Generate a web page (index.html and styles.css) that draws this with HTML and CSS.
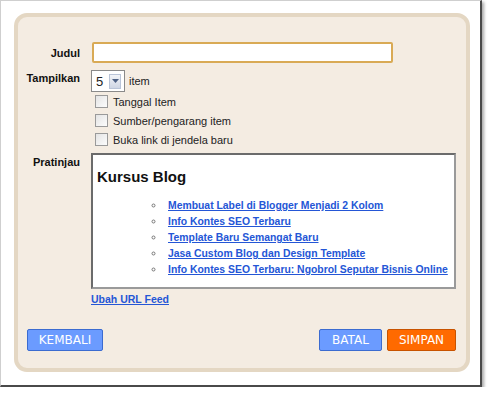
FILE: index.html
```html
<!DOCTYPE html>
<html lang="en">
<head>
    <meta charset="UTF-8">
    <title>Daftar Feed</title>
    <link rel="stylesheet" href="styles.css">
</head>
<body>
    <div class="shot">
        <div class="panel">
            <div class="form">
                <label class="label label-mid">Judul</label>
                <div class="field">
                    <input class="title-input" type="text">
                </div>

                <label class="label label-top">Tampilkan</label>
                <div class="field">
                    <div class="count-row">
                        <div class="select">
                            <span class="select-value">5</span>
                            <span class="select-btn">
                                <svg width="7" height="4" viewBox="0 0 7 4"><path d="M0 0h7L3.5 4z" fill="#4d6185"/></svg>
                            </span>
                        </div>
                        <span class="count-text">item</span>
                    </div>
                    <div class="check"><span class="box"></span>Tanggal Item</div>
                    <div class="check"><span class="box"></span>Sumber/pengarang item</div>
                    <div class="check"><span class="box"></span>Buka link di jendela baru</div>
                </div>

                <label class="label label-preview">Pratinjau</label>
                <div class="field">
                    <div class="preview">
                        <h2>Kursus Blog</h2>
                        <ul>
                            <li><a href="#">Membuat Label di Blogger Menjadi 2 Kolom</a></li>
                            <li><a href="#">Info Kontes SEO Terbaru</a></li>
                            <li><a href="#">Template Baru Semangat Baru</a></li>
                            <li><a href="#">Jasa Custom Blog dan Design Template</a></li>
                            <li><a href="#">Info Kontes SEO Terbaru: Ngobrol Seputar Bisnis Online</a></li>
                        </ul>
                    </div>
                    <a class="feed-link" href="#">Ubah URL Feed</a>
                </div>
            </div>

            <div class="actions">
                <button class="btn btn-blue">KEMBALI</button>
                <div class="actions-right">
                    <button class="btn btn-blue btn-batal">BATAL</button>
                    <button class="btn btn-orange">SIMPAN</button>
                </div>
            </div>
        </div>
    </div>
</body>
</html>
```

FILE: styles.css
```css
body {
    margin: 0;
    background-color: #fff;
    font-family: "Liberation Sans", Arial, sans-serif;
}

.shot {
    width: 482px;
    height: 387px;
    background-color: #fff;
    border-top: 1px solid #cfcfcf;
    border-left: 1px solid #cfcfcf;
    border-right: 2px solid #4a4a4a;
    border-bottom: 2px solid #4a4a4a;
    box-shadow: 2px 2px 3px rgba(0, 0, 0, 0.35);
    padding: 12px 0 0 13px;
    box-sizing: border-box;
}

.panel {
    width: 456px;
    height: 359px;
    box-sizing: border-box;
    background-color: #f4ece2;
    border: 4px solid #e4d7c3;
    border-radius: 13px;
    padding: 25px 10px 0 0;
    display: flex;
    flex-direction: column;
}

.form {
    display: grid;
    grid-template-columns: 62px 1fr;
    column-gap: 11px;
}

.label {
    font-size: 11px;
    font-weight: bold;
    color: #111;
    text-align: right;
}

.label-mid {
    align-self: center;
}

.label-top {
    margin-top: 9px;
}

.label-preview {
    margin-top: 7px;
}

.title-input {
    display: block;
    width: 301px;
    height: 21px;
    box-sizing: border-box;
    border: 2px solid #d9aa55;
    border-radius: 2px;
    background-color: #fff;
    margin: 0;
    margin-left: 1px;
}

.count-row {
    display: flex;
    align-items: center;
    margin-top: 7px;
}

.select {
    width: 34px;
    height: 22px;
    box-sizing: border-box;
    border: 1px solid #8a8a8a;
    background-color: #fff;
    display: flex;
    align-items: center;
    padding: 0 3px 0 4px;
    gap: 4px;
}

.select-value {
    font-size: 13px;
    color: #222;
    width: 10px;
}

.select-btn {
    width: 13px;
    height: 15px;
    box-sizing: border-box;
    border: 1px solid #b9c4d8;
    background: linear-gradient(#f2f4f8, #cfd6e4);
    display: flex;
    align-items: center;
    justify-content: center;
}

.count-text {
    font-size: 11px;
    color: #222;
    margin-left: 4px;
}

.check {
    display: flex;
    align-items: center;
    font-size: 11px;
    color: #222;
    height: 19px;
    margin-left: 4px;
}

.box {
    width: 11px;
    height: 11px;
    border: 1px solid #9a9a9a;
    background: linear-gradient(135deg, #e4e4e4, #fcfcfc);
    margin-right: 5px;
}

.preview {
    margin-top: 4px;
    width: 365px;
    height: 136px;
    box-sizing: border-box;
    border: 2px solid #6b6b6b;
    border-right-color: #9a9a9a;
    border-bottom-color: #9a9a9a;
    background-color: #fff;
    padding: 13px 4px 0 4px;
}

.preview h2 {
    margin: 0;
    font-size: 15px;
    font-weight: bold;
    color: #111;
}

.preview ul {
    list-style: circle;
    margin: 13px 0 0 0;
    padding-left: 68px;
    color: #777;
}

.preview li {
    font-size: 10.4px;
    line-height: 16px;
    padding-left: 3px;
    white-space: nowrap;
}

.preview a {
    color: #2456d6;
    font-weight: bold;
}

.feed-link {
    display: inline-block;
    margin-top: 2px;
    font-size: 10.5px;
    font-weight: bold;
    color: #2456d6;
}

.actions {
    display: flex;
    justify-content: space-between;
    margin-top: auto;
    margin-bottom: 17px;
    padding-left: 9px;
}

.actions-right {
    display: flex;
    gap: 5px;
}

.btn {
    height: 22px;
    font-family: "DejaVu Sans", Verdana, sans-serif;
    font-size: 12px;
    color: #fff;
    padding: 0;
    border-radius: 2px;
    cursor: pointer;
}

.btn-blue {
    width: 76px;
    background-color: #6b9bff;
    border: 1px solid #3b6bd0;
}

.btn-batal {
    width: 63px;
}

.btn-orange {
    width: 69px;
    background-color: #ff6a00;
    border: 1px solid #c85300;
}
```
